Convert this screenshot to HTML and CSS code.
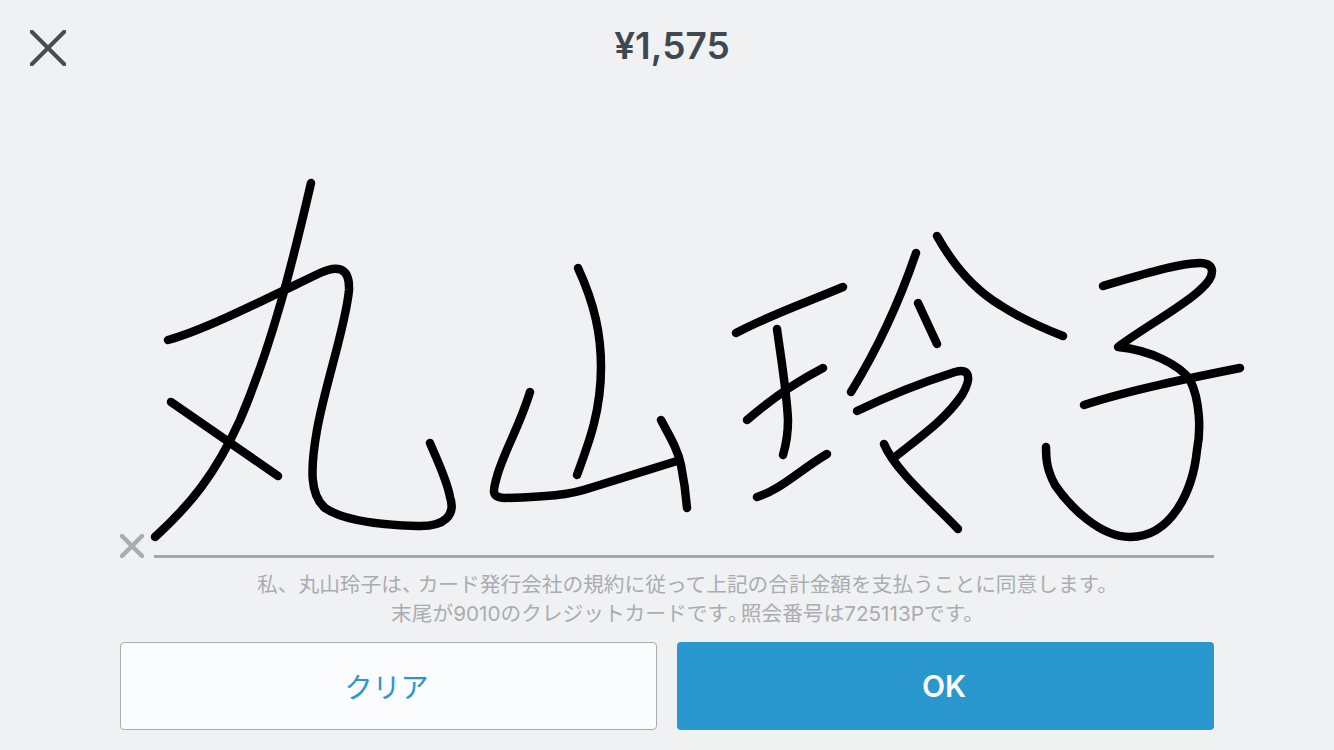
FILE: index.html
```html
<!DOCTYPE html>
<html lang="ja">
<head>
<meta charset="utf-8">
<title>署名</title>
<link rel="stylesheet" href="styles.css">
</head>
<body>
<main class="screen">
  <header class="top">
    <svg class="close" viewBox="0 0 36 36" aria-label="閉じる"><path d="M1.5 1.5 34.5 34.5M34.5 1.5 1.5 34.5"/></svg>
    <div class="amount">¥1,575</div>
  </header>
  <svg class="signature" viewBox="0 92 1334 443">
    <path d="M311 183C292 265 272 345 240 420C215 475 190 505 155 537"/>
    <path d="M168 340C205 330 270 297 320 273C335 266 350 265 349 290C346 325 325 385 317 430C310 470 310 495 325 508C345 522 385 525 417 526C445 527 456 515 450 497C447 480 437 460 430 443"/>
    <path d="M171 402L278 476"/>
    <path d="M530 392C520 425 505 450 498 473C493 490 490 498 505 498C545 497 570 495 590 488L677 461"/>
    <path d="M578 268C595 305 601 335 601 367C601 410 590 440 577 475"/>
    <path d="M661 420C670 437 678 450 681 465C685 485 686 495 687 508"/>
    <path d="M736 333C770 315 800 305 843 287"/>
    <path d="M777 329C782 365 787 395 788 420C788 435 786 445 783 455"/>
    <path d="M747 420C770 400 800 380 823 368"/>
    <path d="M757 497C780 490 800 470 827 454"/>
    <path d="M916 253C900 300 880 345 851 392"/>
    <path d="M937 236C955 268 975 290 1000 305C1020 318 1040 327 1063 336"/>
    <path d="M918 303L937 344"/>
    <path d="M857 411C890 395 930 380 955 372C970 368 972 378 962 395C945 420 920 437 895 457"/>
    <path d="M884 444C895 470 930 500 958 529"/>
    <path d="M1103 286C1140 275 1180 263 1200 263C1215 263 1217 275 1200 290C1185 305 1140 330 1118 347C1150 350 1180 365 1190 380C1200 400 1201 430 1197 450C1193 490 1172 537 1130 537C1100 537 1070 507 1055 485C1047 470 1046 460 1046 447"/>
    <path d="M1084 405C1130 390 1190 378 1240 368"/>
  </svg>
  <div class="sign-row">
    <svg class="sign-x" viewBox="0 0 24 24"><path d="M2 2 22 22M22 2 2 22"/></svg>
    <div class="sign-line"></div>
  </div>
  <p class="terms">私、丸山玲子は<span class="tight-comma">、</span>カード発行会社の規約に従って上記の合計金額を支払うことに同意します。<br>末尾が9010のクレジットカードです<span class="tight-stop">。</span>照会番号は725113Pです。</p>
  <div class="actions">
    <button class="btn btn-clear" type="button">クリア</button>
    <button class="btn btn-ok" type="button">OK</button>
  </div>
</main>
</body>
</html>
```
FILE: styles.css
```css
* { box-sizing: border-box; }
html, body { margin: 0; height: 100%; }
body {
  background: #f0f1f3;
  font-family: "Inter", "Noto Sans CJK JP", sans-serif;
  overflow: hidden;
}
.screen { display: flex; flex-direction: column; width: 1334px; height: 750px; }
.top {
  height: 92px;
  display: grid;
  grid-template-columns: 1fr auto 1fr;
  padding: 30px 30px 0;
  align-items: start;
}
.close { width: 36px; height: 36px; }
.close path { fill: none; stroke: #454d55; stroke-width: 4; stroke-linecap: round; }
.amount {
  grid-column: 2;
  margin: -6px 0 0 10px;
  font-size: 37px;
  line-height: 44px;
  font-weight: 600;
  color: #3f4850;
}
.signature { display: block; width: 1334px; height: 443px; overflow: visible; flex: none; }
.signature path {
  fill: none;
  stroke: #000;
  stroke-width: 8.5;
  stroke-linecap: round;
  stroke-linejoin: round;
}
.sign-row {
  display: flex;
  align-items: flex-end;
  height: 23px;
  padding: 0 120px;
  gap: 10px;
}
.sign-x { width: 24px; height: 24px; flex: none; }
.sign-x path { fill: none; stroke: #a9abaf; stroke-width: 4.5; stroke-linecap: round; }
.sign-line { flex: 1; height: 3px; background: #a3a5a9; }
.terms {
  margin: 12px 0 14px;
  padding-left: 41px;
  text-align: center;
  font-size: 20.7px;
  line-height: 29px;
  color: #a9acb0;
}
.tight-comma { letter-spacing: -5px; }
.tight-stop { letter-spacing: -8px; }
.actions {
  display: grid;
  grid-template-columns: 1fr 1fr;
  gap: 20px;
  padding: 0 120px;
}
.btn {
  height: 88px;
  border-radius: 4px;
  font-family: inherit;
  font-size: 28px;
  padding: 0;
}
.btn-clear { background: #fbfcfe; border: 1px solid #aaacae; color: #2b97cf; padding-right: 4px; }
.btn-ok { background: #2b97cf; border: 0; color: #fff; font-weight: 600; font-size: 30px; padding-right: 3px; }
```
